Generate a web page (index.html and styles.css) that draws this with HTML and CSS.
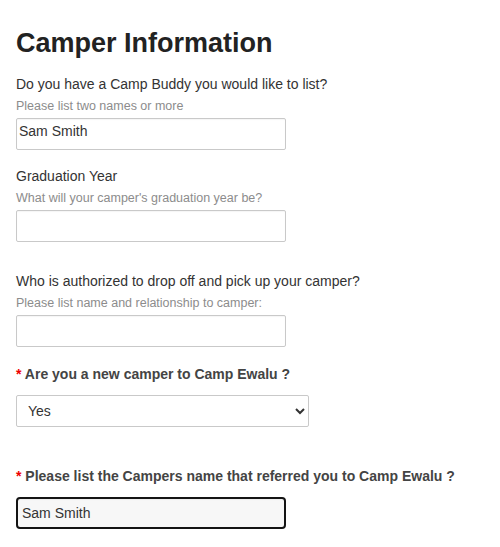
FILE: index.html
```html
<!DOCTYPE html>
<html lang="en">
<head>
<meta charset="utf-8">
<title>Camper Information</title>
<link rel="stylesheet" href="styles.css">
</head>
<body>
<form class="form">
  <h1 class="title">Camper Information</h1>

  <div class="field field-first">
    <label class="label" for="buddy">Do you have a Camp Buddy you would like to list?</label>
    <div class="help">Please list two names or more</div>
    <textarea id="buddy" class="box area">Sam Smith</textarea>
  </div>

  <div class="field">
    <label class="label" for="grad">Graduation Year</label>
    <div class="help">What will your camper's graduation year be?</div>
    <textarea id="grad" class="box area"></textarea>
  </div>

  <div class="field field-wide">
    <label class="label" for="auth">Who is authorized to drop off and pick up your camper?</label>
    <div class="help">Please list name and relationship to camper:</div>
    <textarea id="auth" class="box area"></textarea>
  </div>

  <div class="field field-req">
    <label class="label label-bold" for="newcamper"><span class="req">*</span> Are you a new camper to Camp Ewalu ?</label>
    <select id="newcamper" class="select">
      <option>Yes</option>
      <option>No</option>
    </select>
  </div>

  <div class="field field-req2">
    <label class="label label-bold" for="ref"><span class="req">*</span> Please list the Campers name that referred you to Camp Ewalu ?</label>
    <input id="ref" class="box focus" type="text" value="Sam Smith">
  </div>
</form>
</body>
</html>
```

FILE: styles.css
```css
html, body {
  margin: 0;
  padding: 0;
  background: #ffffff;
}

body {
  font-family: "Liberation Sans", Arial, sans-serif;
  color: #333333;
}

.form {
  padding: 27px 16px 0 16px;
  display: flex;
  flex-direction: column;
}

.title {
  margin: 0;
  font-size: 27px;
  line-height: 32px;
  font-weight: 700;
  color: #222222;
}

.field {
  display: flex;
  flex-direction: column;
  align-items: flex-start;
  margin-top: 16px;
}

.field-first {
  margin-top: 15px;
}

.field-wide {
  margin-top: 29px;
}

.field-req {
  margin-top: 17px;
}

.field-req2 {
  margin-top: 39px;
}

.label {
  font-size: 14px;
  line-height: 20px;
  color: #333333;
  margin-bottom: 4px;
}

.label-bold {
  font-weight: 700;
  font-size: 14px;
  color: #444444;
  margin-bottom: 11px;
}

.req {
  color: #ee0000;
}

.help {
  font-size: 12.5px;
  line-height: 17px;
  color: #8c8c8c;
  margin-bottom: 3px;
}

.box {
  box-sizing: border-box;
  width: 270px;
  height: 32px;
  margin: 0;
  border: 1px solid #c9c9c9;
  border-radius: 2px;
  background: #ffffff;
  font-family: "Liberation Sans", Arial, sans-serif;
  font-size: 14px;
  color: #333333;
  box-shadow: inset 0 1px 1px rgba(0, 0, 0, 0.04);
}

.area {
  resize: none;
  overflow: hidden;
  padding: 4px 2px;
  line-height: 16px;
}

.focus {
  border: 2px solid #141414;
  border-radius: 4px;
  background: #f7f7f7;
  padding: 0 4px;
  outline: none;
}

.select {
  box-sizing: border-box;
  width: 293px;
  height: 32px;
  margin: 0;
  padding: 0 0 0 7px;
  border: 1px solid #c9c9c9;
  border-radius: 2px;
  background-color: #ffffff;
  font-family: "Liberation Sans", Arial, sans-serif;
  font-size: 14px;
  color: #333333;
}
```
